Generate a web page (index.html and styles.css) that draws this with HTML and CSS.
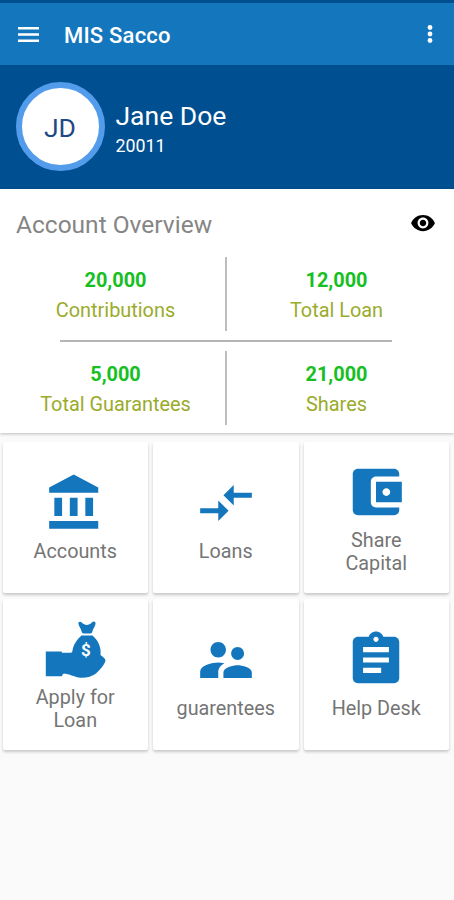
FILE: index.html
```html
<!DOCTYPE html>
<html lang="en">
<head>
  <meta charset="UTF-8" />
  <meta name="viewport" content="width=device-width, initial-scale=1.0">
  <title>MIS Sacco</title>
  <link rel="stylesheet" href="styles.css">
</head>
<body>

<header class="app-bar">
  <svg class="menu-icon" viewBox="0 0 21 15"><path d="M0 0h21v2.4H0zM0 6.3h21v2.4H0zM0 12.6h21V15H0z"/></svg>
  <h1 class="app-title">MIS Sacco</h1>
  <svg class="more-icon" viewBox="0 0 6 18"><circle cx="3" cy="2.5" r="2.4"/><circle cx="3" cy="9" r="2.4"/><circle cx="3" cy="15.5" r="2.4"/></svg>
</header>

<section class="profile">
  <div class="avatar"><span>JD</span></div>
  <div class="profile-info">
    <div class="profile-name">Jane Doe</div>
    <div class="profile-number">20011</div>
  </div>
</section>

<section class="overview">
  <div class="overview-head">
    <h2>Account Overview</h2>
    <svg class="eye-icon" viewBox="0 0 24 24"><path d="M12 4.500C7 4.500 2.730 7.610 1 12c1.730 4.390 6 7.500 11 7.500s9.270-3.110 11-7.500c-1.730-4.390-6-7.500-11-7.500zM12 17c-2.760 0-5-2.240-5-5s2.240-5 5-5 5 2.240 5 5-2.240 5-5 5zm0-8c-1.660 0-3 1.340-3 3s1.340 3 3 3 3-1.340 3-3-1.340-3-3-3z"/></svg>
  </div>
  <div class="overview-row">
    <div class="stat"><b>20,000</b><span>Contributions</span></div>
    <div class="stat"><b>12,000</b><span>Total Loan</span></div>
  </div>
  <hr>
  <div class="overview-row">
    <div class="stat"><b>5,000</b><span>Total Guarantees</span></div>
    <div class="stat"><b>21,000</b><span>Shares</span></div>
  </div>
</section>

<main class="menu-grid">
  <a class="menu-card">
    <svg viewBox="0 0 24 24"><path d="M4 10v7h3v-7H4zm6 0v7h3v-7h-3zM2 22h19v-3H2v3zm14-12v7h3v-7h-3zm-4.500-9L2 6v2h19V6l-9.500-5z"/></svg>
    <span>Accounts</span>
  </a>
  <a class="menu-card">
    <svg viewBox="0 0 24 24"><path d="M9.010 14H2v2h7.010v3L13 15l-3.990-4v3zm5.980-1v-3H22V8h-7.010V5L11 9l3.990 4z"/></svg>
    <span>Loans</span>
  </a>
  <a class="menu-card">
    <svg viewBox="0 0 24 24"><path d="M21 18v1c0 1.100-.9 2-2 2H5c-1.110 0-2-.9-2-2V5c0-1.100.89-2 2-2h14c1.100 0 2 .9 2 2v1h-9c-1.110 0-2 .9-2 2v8c0 1.100.89 2 2 2h9zm-9-2h10V8H12v8zm4-2.500c-.83 0-1.500-.67-1.500-1.500s.67-1.500 1.500-1.500 1.500.67 1.500 1.500-.67 1.500-1.500 1.500z"/></svg>
    <span>Share<br>Capital</span>
  </a>
  <a class="menu-card">
    <svg viewBox="0 0 62 62">
      <path d="M34.500 6c-.6-2.500 1.800-3 3.300-1.500 1.800 1.800 3 2.400 5 2.400s3.200-.6 5-2.400c1.600-1.600 4.200-1 3.700 1.500-.6 3-2.400 4.500-3.200 7.800-.3 1.300-.8 1.700-2 1.700h-6.600c-1.200 0-1.700-.4-2-1.700C36.900 10.500 35.200 9 34.500 6z"/>
      <path d="M37.500 17.500h11c4.200 3.600 7.300 8.500 8 14.500.2 1.800.1 3.500 0 5 2.200 1.500 4.500 3 5 5.500-.6 3.500-5.500 9.500-9.500 13-4.500 3.400-11.500 5-17.500 4-6.500-1.200-10-4-15.500-3.600l-1.200 2.400H1.800V33.500H17.500l.6 1.300h8.500c1.400 0 1.700-1 1.900-2.300.8-6 4.800-11.300 9-15z"/>
      <text x="42" y="38" class="bag-sign">$</text>
    </svg>
    <span>Apply for<br>Loan</span>
  </a>
  <a class="menu-card">
    <svg viewBox="0 0 24 24"><path d="M16.500 12c1.380 0 2.490-1.120 2.490-2.500S17.880 7 16.500 7C15.120 7 14 8.120 14 9.500s1.120 2.500 2.500 2.500zM9 11c1.660 0 2.990-1.340 2.990-3S10.660 5 9 5C7.340 5 6 6.340 6 8s1.340 3 3 3zm7.500 3c-1.830 0-5.500.92-5.500 2.750V19h11v-2.250c0-1.830-3.670-2.750-5.500-2.750zM9 13c-2.330 0-7 1.170-7 3.500V19h7v-2.250c0-.85.33-2.340 2.370-3.470C10.500 13.100 9.660 13 9 13z"/></svg>
    <span>guarentees</span>
  </a>
  <a class="menu-card">
    <svg viewBox="0 0 24 24"><path d="M19 3h-4.180C14.400 1.840 13.300 1 12 1c-1.300 0-2.400.84-2.820 2H5c-1.100 0-2 .9-2 2v14c0 1.100.9 2 2 2h14c1.100 0 2-.9 2-2V5c0-1.100-.9-2-2-2zm-7 0c.55 0 1 .45 1 1s-.45 1-1 1-1-.45-1-1 .45-1 1-1zm2 14H7v-2h7v2zm3-4H7v-2h10v2zm0-4H7V7h10v2z"/></svg>
    <span>Help Desk</span>
  </a>
</main>

</body>
</html>
```

FILE: styles.css
```css
* {
  box-sizing: border-box;
}
body {
  margin: 0;
  min-height: 100vh;
  background: #fafafa;
  font-family: Roboto, sans-serif;
  color: #757575;
}
/* App bar */
.app-bar {
  display: flex;
  align-items: center;
  height: 65px;
  padding: 0 21px 0 18px;
  border-top: 3px solid #004f8e;
  background: #1477be;
  color: #fff;
}
.app-bar svg {
  fill: #fff;
}
.menu-icon {
  width: 21px;
  height: 15px;
}
.app-title {
  flex: 1;
  margin: 3px 0 0 25px;
  font-size: 22px;
  font-weight: 500;
  letter-spacing: 0.2px;
}
.more-icon {
  width: 6px;
  height: 18px;
}
/* Profile */
.profile {
  display: flex;
  align-items: center;
  height: 123.5px;
  padding: 0 15.5px;
  background: #004f90;
  color: #fff;
}
.avatar {
  display: flex;
  align-items: center;
  justify-content: center;
  width: 89px;
  height: 89px;
  border: 6px solid #539ceb;
  border-radius: 50%;
  background: #fff;
  color: #1d4a85;
  font-size: 26.5px;
}
.avatar span {
  padding-top: 1px;
}
.profile-info {
  margin-left: 11px;
  padding-top: 8px;
}
.profile-name {
  font-size: 26.5px;
  line-height: 30px;
}
.profile-number {
  padding-top: 1px;
  font-size: 17.8px;
  line-height: 28px;
}
/* Account overview */
.overview {
  height: 244.5px;
  padding: 0 8px 0 6px;
  background: #fff;
  box-shadow: 0 1px 3px rgba(0,0,0,0.25);
}
.overview-head {
  display: flex;
  align-items: center;
  justify-content: space-between;
  height: 68.5px;
  padding: 1px 10px 0 10px;
}
.overview-head h2 {
  margin: 2px 0 0;
  font-size: 24.5px;
  font-weight: 400;
  color: #858585;
}
.eye-icon {
  width: 26px;
  height: 26px;
  fill: #000;
}
.overview-row {
  display: flex;
  height: 74px;
}
.overview hr {
  width: 332px;
  height: 2px;
  margin: 9px auto 8.5px;
  border: 0;
  background: #b5b5b5;
}
.stat {
  flex: 1;
  display: flex;
  flex-direction: column;
  align-items: center;
  padding-top: 9px;
  font-size: 19.9px;
  line-height: 30px;
  color: #9aab2b;
}
.stat:first-child {
  border-right: 2px solid #bdbdbd;
}
.stat b {
  font-weight: 700;
  color: #16c01f;
}
/* Menu cards */
.menu-grid {
  display: grid;
  grid-template-columns: repeat(3, 1fr);
  grid-auto-rows: 151px;
  gap: 6px 5px;
  padding: 9px 5px 0 2.5px;
}
.menu-card {
  display: flex;
  flex-direction: column;
  align-items: center;
  justify-content: center;
  padding-top: 1px;
  border-radius: 2px;
  background: #fff;
  box-shadow: 0 2px 3px rgba(0,0,0,0.2);
  font-size: 19.8px;
  line-height: 23.5px;
  text-align: center;
}
.menu-card svg {
  width: 62px;
  height: 62px;
  margin-bottom: 6px;
  fill: #1477be;
}
.menu-card .bag-sign {
  font-size: 17px;
  font-weight: 700;
  text-anchor: middle;
  fill: #fff;
}
```
